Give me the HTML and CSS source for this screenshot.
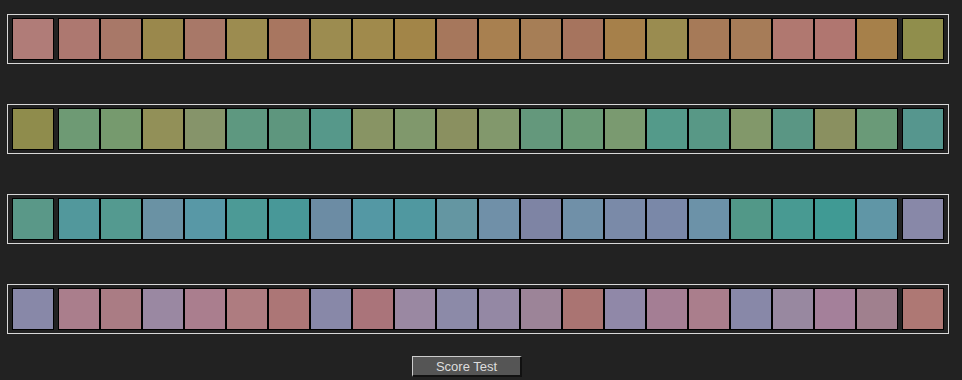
FILE: index.html
```html
<!DOCTYPE html>
<html>
<head>
<meta charset="utf-8">
<link rel="stylesheet" href="styles.css">
</head>
<body>
<div class="page">
  <div class="tray">
    <div class="cap fixed" style="background:#b07c78"></div>
    <div class="moves">
      <div class="cap" style="background:#ad7870"></div>
      <div class="cap" style="background:#a87868"></div>
      <div class="cap" style="background:#9a884c"></div>
      <div class="cap" style="background:#a87868"></div>
      <div class="cap" style="background:#9c8c50"></div>
      <div class="cap" style="background:#a87660"></div>
      <div class="cap" style="background:#9c8c50"></div>
      <div class="cap" style="background:#a08a4c"></div>
      <div class="cap" style="background:#a28548"></div>
      <div class="cap" style="background:#a6775c"></div>
      <div class="cap" style="background:#a88050"></div>
      <div class="cap" style="background:#a67e56"></div>
      <div class="cap" style="background:#a6745e"></div>
      <div class="cap" style="background:#a6804a"></div>
      <div class="cap" style="background:#9a8c50"></div>
      <div class="cap" style="background:#a67a58"></div>
      <div class="cap" style="background:#a67c58"></div>
      <div class="cap" style="background:#b07870"></div>
      <div class="cap" style="background:#b07670"></div>
      <div class="cap" style="background:#a6804a"></div>
    </div>
    <div class="cap fixed" style="background:#908e4c"></div>
  </div>

  <div class="tray">
    <div class="cap fixed" style="background:#8f8c4c"></div>
    <div class="moves">
      <div class="cap" style="background:#6e9a74"></div>
      <div class="cap" style="background:#769a6e"></div>
      <div class="cap" style="background:#929058"></div>
      <div class="cap" style="background:#86946a"></div>
      <div class="cap" style="background:#5e9880"></div>
      <div class="cap" style="background:#5e967e"></div>
      <div class="cap" style="background:#56988a"></div>
      <div class="cap" style="background:#889464"></div>
      <div class="cap" style="background:#80986c"></div>
      <div class="cap" style="background:#8a9060"></div>
      <div class="cap" style="background:#82986c"></div>
      <div class="cap" style="background:#64987c"></div>
      <div class="cap" style="background:#6a9a76"></div>
      <div class="cap" style="background:#7a9a70"></div>
      <div class="cap" style="background:#549a8a"></div>
      <div class="cap" style="background:#589886"></div>
      <div class="cap" style="background:#82986a"></div>
      <div class="cap" style="background:#5a9684"></div>
      <div class="cap" style="background:#8a9060"></div>
      <div class="cap" style="background:#6a9a78"></div>
    </div>
    <div class="cap fixed" style="background:#56968e"></div>
  </div>

  <div class="tray">
    <div class="cap fixed" style="background:#5a9888"></div>
    <div class="moves">
      <div class="cap" style="background:#52989c"></div>
      <div class="cap" style="background:#549a90"></div>
      <div class="cap" style="background:#6a92a4"></div>
      <div class="cap" style="background:#5898a6"></div>
      <div class="cap" style="background:#4c9a96"></div>
      <div class="cap" style="background:#489898"></div>
      <div class="cap" style="background:#6c8ca4"></div>
      <div class="cap" style="background:#5498a4"></div>
      <div class="cap" style="background:#5098a0"></div>
      <div class="cap" style="background:#6496a2"></div>
      <div class="cap" style="background:#7090a8"></div>
      <div class="cap" style="background:#7e84a4"></div>
      <div class="cap" style="background:#7090a8"></div>
      <div class="cap" style="background:#7a8aa8"></div>
      <div class="cap" style="background:#7a88a8"></div>
      <div class="cap" style="background:#6c92a8"></div>
      <div class="cap" style="background:#529888"></div>
      <div class="cap" style="background:#489a92"></div>
      <div class="cap" style="background:#409a94"></div>
      <div class="cap" style="background:#6096a6"></div>
    </div>
    <div class="cap fixed" style="background:#8888a8"></div>
  </div>

  <div class="tray">
    <div class="cap fixed" style="background:#8888a8"></div>
    <div class="moves">
      <div class="cap" style="background:#aa7e8c"></div>
      <div class="cap" style="background:#aa7c84"></div>
      <div class="cap" style="background:#9a88a2"></div>
      <div class="cap" style="background:#aa7e8e"></div>
      <div class="cap" style="background:#ae7c80"></div>
      <div class="cap" style="background:#ac7676"></div>
      <div class="cap" style="background:#8888a8"></div>
      <div class="cap" style="background:#aa747a"></div>
      <div class="cap" style="background:#9a88a2"></div>
      <div class="cap" style="background:#8c8aa8"></div>
      <div class="cap" style="background:#9488a4"></div>
      <div class="cap" style="background:#9c8498"></div>
      <div class="cap" style="background:#aa7472"></div>
      <div class="cap" style="background:#9088a8"></div>
      <div class="cap" style="background:#a47e94"></div>
      <div class="cap" style="background:#aa7e8c"></div>
      <div class="cap" style="background:#8888a8"></div>
      <div class="cap" style="background:#9888a0"></div>
      <div class="cap" style="background:#a4809a"></div>
      <div class="cap" style="background:#a0808e"></div>
    </div>
    <div class="cap fixed" style="background:#ae7874"></div>
  </div>

  <div class="actions">
    <button class="score">Score Test</button>
  </div>
</div>
</body>
</html>
```

FILE: styles.css
```css
html, body {
  margin: 0;
  padding: 0;
  background: #222222;
}

.page {
  padding: 14px 0 0 7px;
  font-family: "Liberation Sans", Arial, sans-serif;
}

.tray {
  display: flex;
  gap: 4px;
  width: 940px;
  padding: 3px 4px;
  box-sizing: content-box;
  width: 932px;
  border: 1px solid #d8d8d8;
  margin-bottom: 40px;
}

.moves {
  display: flex;
}

.cap {
  width: 40px;
  height: 40px;
  border: 1px solid #000;
  flex: none;
}

.actions {
  margin-top: -18px;
  padding-left: 405px;
}

.score {
  display: block;
  width: 110px;
  height: 21px;
  padding: 0;
  margin: 0;
  background: #555555;
  color: #dddddd;
  font-family: "Liberation Sans", Arial, sans-serif;
  font-size: 13px;
  line-height: 17px;
  border-style: solid;
  border-width: 1px 2px 2px 1px;
  border-color: #cccccc #111111 #111111 #cccccc;
}
```
